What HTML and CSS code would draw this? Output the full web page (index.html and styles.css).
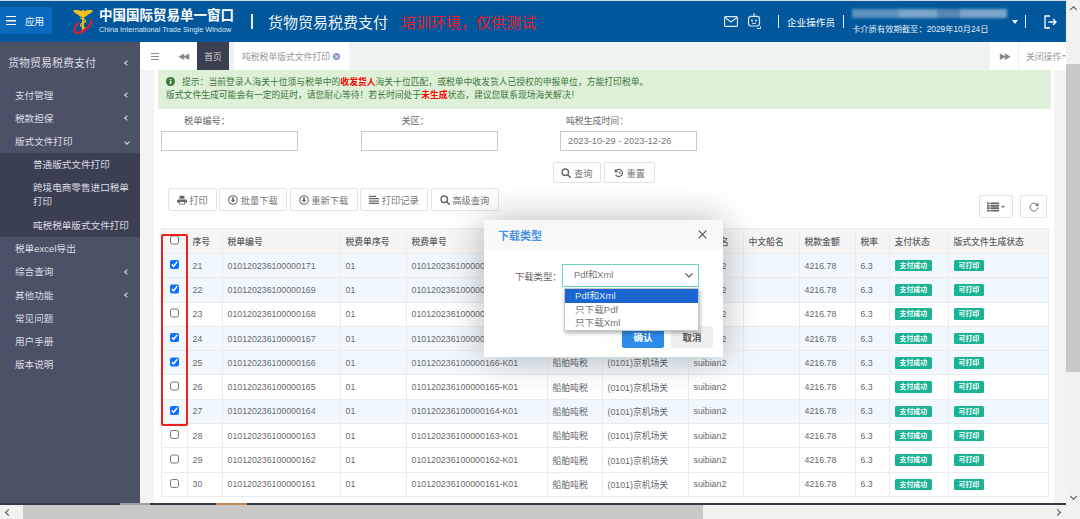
FILE: index.html
```html
<!DOCTYPE html>
<html lang="zh-CN">
<head>
    <meta charset="UTF-8">
    <title>货物贸易税费支付</title>
    <link rel="stylesheet" href="styles.css">
</head>
<body>
    <svg class="icon-defs" width="0" height="0">
        <symbol id="i-print" viewBox="0 0 16 14"><path fill="currentColor" d="M4 0h6.5L12 1.5V5H4zM1.5 6h13A1.5 1.5 0 0 1 16 7.500V11h-3v3H3v-3H0V7.500A1.500 1.500 0 0 1 1.500 6zM4.500 10v2.800h7V10z"/></symbol>
        <symbol id="i-download" viewBox="0 0 14 14"><circle cx="7" cy="7" r="6" fill="none" stroke="currentColor" stroke-width="1.500"/><path fill="currentColor" d="M5.800 3h2.400v4h2L7 10.500 3.800 7h2z"/></symbol>
        <symbol id="i-lines" viewBox="0 0 14 12"><path fill="currentColor" d="M0 0h10v1.800H0zM0 3.300h14v1.800H0zM0 6.600h14v1.800H0zM0 9.900h14v1.800H0z"/></symbol>
        <symbol id="i-search" viewBox="0 0 14 14"><circle cx="6" cy="6" r="4.500" fill="none" stroke="currentColor" stroke-width="2"/><path d="M9.500 9.500L13 13" stroke="currentColor" stroke-width="2.200" stroke-linecap="round"/></symbol>
        <symbol id="i-undo" viewBox="0 0 14 14"><path d="M3.200 3.500A5 5 0 1 1 2.200 9" fill="none" stroke="currentColor" stroke-width="1.700"/><path fill="currentColor" d="M1 1v5h5z"/><path d="M7.500 4.500V7.500H9.800" fill="none" stroke="currentColor" stroke-width="1.300"/></symbol>
        <symbol id="i-thlist" viewBox="0 0 16 12"><path fill="currentColor" d="M0 0h3.500v2.400H0zM4.500 0H16v2.400H4.500zM0 3.200h3.500v2.400H0zM4.500 3.200H16v2.400H4.500zM0 6.400h3.500v2.400H0zM4.500 6.400H16v2.400H4.500zM0 9.600h3.500V12H0zM4.500 9.600H16V12H4.500z"/></symbol>
        <symbol id="i-refresh" viewBox="0 0 14 14"><path d="M11.600 4.200A5.500 5.500 0 1 0 12.500 7.500" fill="none" stroke="currentColor" stroke-width="1.300"/><path fill="currentColor" d="M13 1v4.500H8.500z"/></symbol>
    </svg>

    <div class="viewport">
        <div class="app">
            <header class="topbar">
                <button class="app-btn"><span class="burger"></span>应用</button>
                <svg class="logo" viewBox="0 0 20 26">
                    <path fill="#f4c21f" d="M10 3C7 1 3 .5 0 1.500c1 2 3 3.500 5 4 1.500 2 3 2.500 5 2.500s3.500-.5 5-2.500c2-.5 4-2 5-4C17 .5 13 1 10 3z"/>
                    <path fill="none" stroke="#f4c21f" stroke-width="1.800" d="M10 1v21"/>
                    <path fill="none" stroke="#f4c21f" stroke-width="1.200" d="M7 9c4 1 6 2 5.500 3.500S7.500 14 7.500 16s4 2 5 3.500"/>
                    <path fill="none" stroke="#e0202c" stroke-width="2.200" d="M18 10.500c1 3-1.500 7-5.500 10S3 25 1.800 22.500c-1-2.500 1-6 4.200-9"/>
                </svg>
                <div class="brand">
                    <div class="brand-cn">中国国际贸易单一窗口</div>
                    <div class="brand-en">China International Trade Single Window</div>
                </div>
                <span class="bar bar-title"></span>
                <span class="system-name">货物贸易税费支付</span>
                <span class="env-note">培训环境，仅供测试</span>

                <div class="topbar-right">
                    <svg class="top-icon" width="14" height="11" viewBox="0 0 14 11"><rect x=".6" y=".6" width="12.800" height="9.800" rx="1" fill="none" stroke="#dce8f2" stroke-width="1.100"/><path d="M1 1.500l6 4.500 6-4.500" fill="none" stroke="#dce8f2" stroke-width="1.100"/></svg>
                    <svg class="top-icon robot" width="15" height="17" viewBox="0 0 15 17"><path d="M7 0v3" stroke="#dce8f2" stroke-width="1.200"/><rect x="1.500" y="3.300" width="11" height="9.700" rx="2.500" fill="none" stroke="#dce8f2" stroke-width="1.200"/><circle cx="5" cy="7.500" r="1" fill="#dce8f2"/><circle cx="9" cy="7.500" r="1" fill="#dce8f2"/><path d="M5 10q2 1.300 4 0" fill="none" stroke="#dce8f2"/><path d="M10 15.500h3.500v-2" fill="none" stroke="#dce8f2"/></svg>
                    <span class="bar bar-role"></span>
                    <span class="role">企业操作员</span>
                    <span class="bar bar-card"></span>
                    <div class="account">
                        <div class="account-blur"></div>
                        <div class="account-date">卡介质有效期截至：2029年10月24日</div>
                    </div>
                    <span class="caret-white"></span>
                    <span class="bar bar-exit"></span>
                    <svg class="exit" width="13" height="14" viewBox="0 0 13 14"><path d="M6 1H1v12h5" fill="none" stroke="#fff" stroke-width="1.300"/><path d="M4.500 7H12M9 4l3 3-3 3" fill="none" stroke="#fff" stroke-width="1.300"/></svg>
                </div>
            </header>

            <div class="body-row">
                <nav class="sidebar">
                    <div class="side-title">货物贸易税费支付<i class="chev"></i></div>
                    <a class="side-item">支付管理<i class="chev"></i></a>
                    <a class="side-item">税款担保<i class="chev"></i></a>
                    <a class="side-item">版式文件打印<i class="chev chev-open"></i></a>
                    <div class="side-sub">
                        <a class="sub-item">普通版式文件打印</a>
                        <a class="sub-item sub-two">跨境电商零售进口税单打印</a>
                        <a class="sub-item">吨税税单版式文件打印</a>
                    </div>
                    <a class="side-item">税单excel导出</a>
                    <a class="side-item">综合查询<i class="chev"></i></a>
                    <a class="side-item">其他功能<i class="chev"></i></a>
                    <a class="side-item">常见问题</a>
                    <a class="side-item">用户手册</a>
                    <a class="side-item">版本说明</a>
                </nav>

                <main class="main">
                    <div class="tabbar">
                        <div class="tab-tool tab-burger"><span class="burger burger-grey"></span></div>
                        <div class="tab-tool tab-back">&#9664;&#9664;</div>
                        <div class="tab tab-home">首页</div>
                        <div class="tab tab-active">吨税税单版式文件打印<span class="tab-close">×</span></div>
                        <div class="tab-fill"></div>
                        <div class="tab-tool tab-next">&#9654;&#9654;</div>
                        <div class="tab-close-ops">关闭操作<span class="caret-grey"></span></div>
                    </div>

                    <div class="content">
                        <div class="panel">
                            <div class="alert">
                                <p><svg class="alert-icon" viewBox="0 0 12 12"><circle cx="6" cy="6" r="6" fill="#3c763d"/><rect x="5" y="5" width="2.200" height="4.500" fill="#dff0d8"/><rect x="5" y="2.300" width="2.200" height="1.800" fill="#dff0d8"/></svg>提示：当前登录人海关十位须与税单中的<b>收发货人</b>海关十位匹配，或税单中收发货人已授权的申报单位，方能打印税单。</p>
                                <p>版式文件生成可能会有一定的延时，请您耐心等待！若长时间处于<b>未生成</b>状态，建议您联系现场海关解决！</p>
                            </div>

                            <div class="filters">
                                <div class="field">
                                    <label>税单编号：</label>
                                    <input type="text">
                                </div>
                                <div class="field">
                                    <label>关区：</label>
                                    <input type="text">
                                </div>
                                <div class="field field-date">
                                    <label>吨税生成时间：</label>
                                    <input type="text" value="2023-10-29 - 2023-12-26">
                                </div>
                            </div>

                            <div class="query-row">
                                <button class="btn"><svg class="ico"><use href="#i-search"/></svg>查询</button>
                                <button class="btn"><svg class="ico"><use href="#i-undo"/></svg>重置</button>
                            </div>

                            <div class="toolbar">
                                <div class="toolbar-left">
                                    <button class="btn"><svg class="ico"><use href="#i-print"/></svg>打印</button>
                                    <button class="btn"><svg class="ico"><use href="#i-download"/></svg>批量下载</button>
                                    <button class="btn"><svg class="ico"><use href="#i-download"/></svg>重新下载</button>
                                    <button class="btn"><svg class="ico"><use href="#i-lines"/></svg>打印记录</button>
                                    <button class="btn"><svg class="ico"><use href="#i-search"/></svg>高级查询</button>
                                </div>
                                <div class="toolbar-right">
                                    <button class="btn btn-columns"><svg class="ico"><use href="#i-thlist"/></svg><span class="caret-grey caret-dark"></span></button>
                                    <button class="btn btn-refresh"><svg class="ico"><use href="#i-refresh"/></svg></button>
                                </div>
                            </div>

                            <table class="grid">
                                <colgroup>
                                    <col class="c-check"><col class="c-no"><col class="c-bill"><col class="c-seq"><col class="c-fee">
                                    <col class="c-kind"><col class="c-port"><col class="c-ship"><col class="c-ship-cn">
                                    <col class="c-amount"><col class="c-rate"><col class="c-pay"><col class="c-file">
                                </colgroup>
                                <thead>
                                    <tr><th><input type="checkbox"></th><th>序号</th><th>税单编号</th><th>税费单序号</th><th>税费单号</th><th>税种</th><th>关区</th><th>英文船名</th><th>中文船名</th><th>税款金额</th><th>税率</th><th>支付状态</th><th>版式文件生成状态</th></tr>
                                </thead>
                                <tbody>
                                    <tr class="picked"><td><input type="checkbox" checked></td><td>21</td><td>010120236100000171</td><td>01</td><td>010120236100000171-K01</td><td>船舶吨税</td><td>(0101)京机场关</td><td>suibian2</td><td></td><td>4216.78</td><td>6.3</td><td><span class="badge">支付成功</span></td><td><span class="badge">可打印</span></td></tr>
                                    <tr class="picked"><td><input type="checkbox" checked></td><td>22</td><td>010120236100000169</td><td>01</td><td>010120236100000169-K01</td><td>船舶吨税</td><td>(0101)京机场关</td><td>suibian2</td><td></td><td>4216.78</td><td>6.3</td><td><span class="badge">支付成功</span></td><td><span class="badge">可打印</span></td></tr>
                                    <tr><td><input type="checkbox"></td><td>23</td><td>010120236100000168</td><td>01</td><td>010120236100000168-K01</td><td>船舶吨税</td><td>(0101)京机场关</td><td>suibian2</td><td></td><td>4216.78</td><td>6.3</td><td><span class="badge">支付成功</span></td><td><span class="badge">可打印</span></td></tr>
                                    <tr class="picked"><td><input type="checkbox" checked></td><td>24</td><td>010120236100000167</td><td>01</td><td>010120236100000167-K01</td><td>船舶吨税</td><td>(0101)京机场关</td><td>suibian2</td><td></td><td>4216.78</td><td>6.3</td><td><span class="badge">支付成功</span></td><td><span class="badge">可打印</span></td></tr>
                                    <tr class="picked"><td><input type="checkbox" checked></td><td>25</td><td>010120236100000166</td><td>01</td><td>010120236100000166-K01</td><td>船舶吨税</td><td>(0101)京机场关</td><td>suibian2</td><td></td><td>4216.78</td><td>6.3</td><td><span class="badge">支付成功</span></td><td><span class="badge">可打印</span></td></tr>
                                    <tr><td><input type="checkbox"></td><td>26</td><td>010120236100000165</td><td>01</td><td>010120236100000165-K01</td><td>船舶吨税</td><td>(0101)京机场关</td><td>suibian2</td><td></td><td>4216.78</td><td>6.3</td><td><span class="badge">支付成功</span></td><td><span class="badge">可打印</span></td></tr>
                                    <tr class="picked"><td><input type="checkbox" checked></td><td>27</td><td>010120236100000164</td><td>01</td><td>010120236100000164-K01</td><td>船舶吨税</td><td>(0101)京机场关</td><td>suibian2</td><td></td><td>4216.78</td><td>6.3</td><td><span class="badge">支付成功</span></td><td><span class="badge">可打印</span></td></tr>
                                    <tr><td><input type="checkbox"></td><td>28</td><td>010120236100000163</td><td>01</td><td>010120236100000163-K01</td><td>船舶吨税</td><td>(0101)京机场关</td><td>suibian2</td><td></td><td>4216.78</td><td>6.3</td><td><span class="badge">支付成功</span></td><td><span class="badge">可打印</span></td></tr>
                                    <tr><td><input type="checkbox"></td><td>29</td><td>010120236100000162</td><td>01</td><td>010120236100000162-K01</td><td>船舶吨税</td><td>(0101)京机场关</td><td>suibian2</td><td></td><td>4216.78</td><td>6.3</td><td><span class="badge">支付成功</span></td><td><span class="badge">可打印</span></td></tr>
                                    <tr><td><input type="checkbox"></td><td>30</td><td>010120236100000161</td><td>01</td><td>010120236100000161-K01</td><td>船舶吨税</td><td>(0101)京机场关</td><td>suibian2</td><td></td><td>4216.78</td><td>6.3</td><td><span class="badge">支付成功</span></td><td><span class="badge">可打印</span></td></tr>
                                </tbody>
                            </table>
                        </div>
                    </div>
                </main>
            </div>
            <div class="cut-line"></div>
        </div>

        <div class="vscroll">
            <span class="arrow arrow-up"></span>
            <span class="vthumb"></span>
            <span class="arrow arrow-down"></span>
        </div>
    </div>

    <div class="hscroll">
        <span class="arrow arrow-left"></span>
        <span class="hthumb"></span>
        <span class="arrow arrow-right"></span>
    </div>

    <!-- red annotation round the checkbox column -->
    <div class="annotation"></div>

    <div class="modal">
        <div class="modal-head">
            <span class="modal-title">下载类型</span>
            <svg class="modal-x" width="9" height="9" viewBox="0 0 9 9"><path d="M.7.700l7.600 7.600M8.300.700L.7 8.300" stroke="#555" stroke-width="1.200"/></svg>
        </div>
        <div class="modal-body">
            <div class="modal-row">
                <label>下载类型：</label>
                <div class="select">Pdf和Xml<svg class="select-chev" width="8" height="5" viewBox="0 0 8 5"><path d="M.5.500L4 4 7.500.500" fill="none" stroke="#555" stroke-width="1.100"/></svg>
                    <ul class="options">
                        <li class="selected">Pdf和Xml</li>
                        <li>只下载Pdf</li>
                        <li>只下载Xml</li>
                    </ul>
                </div>
            </div>
            <div class="modal-foot">
                <button class="m-btn m-ok">确认</button>
                <button class="m-btn m-cancel">取消</button>
            </div>
        </div>
    </div>
</body>
</html>
```

FILE: styles.css
```css
* {
    box-sizing: border-box;
}
html, body {
    margin: 0;
    height: 519px;
    overflow: hidden;
}
body {
    position: relative;
    width: 1080px;
    font-family: "Liberation Sans", "Noto Sans CJK SC", sans-serif;
    font-size: 8.8px;
    color: #676a6c;
    background: #fff;
}
button, input {
    font-family: inherit;
}
.icon-defs {
    position: absolute;
}
.viewport {
    display: flex;
    height: 505px;
}
.app {
    flex: 1;
    min-width: 0;
    display: flex;
    flex-direction: column;
}

/* top bar */
.topbar {
    height: 42px;
    flex: none;
    display: flex;
    align-items: center;
    background: #01579b;
    border-top: 1px solid #cfdbe5;
    color: #fff;
}
.app-btn {
    width: 52px;
    height: 27px;
    margin-top: -2px;
    display: flex;
    align-items: center;
    gap: 9px;
    padding: 0 0 0 6px;
    border: none;
    border-radius: 0 3px 3px 0;
    background: #0b69bd;
    color: #fff;
    font-size: 9.500px;
}
.burger {
    display: block;
    width: 10px;
    height: 9px;
    border-top: 1.500px solid #fff;
    border-bottom: 1.500px solid #fff;
    background: linear-gradient(#fff, #fff) center / 100% 1.500px no-repeat;
}
.burger-grey {
    width: 8px;
    height: 7px;
    border-color: #888;
    border-width: 1px;
    background-image: linear-gradient(#888, #888);
    background-size: 100% 1px;
}
.logo {
    width: 20px;
    height: 26px;
    margin: 0 0 0 21px;
}
.brand {
    margin-left: 6px;
    width: 146px;
}
.brand-cn {
    font-size: 13.500px;
    font-weight: bold;
    line-height: 16px;
    white-space: nowrap;
}
.brand-en {
    font-size: 7.300px;
    line-height: 10px;
    margin-top: 1px;
    white-space: nowrap;
    color: #dbe6f0;
}
.bar {
    display: block;
    width: 1px;
    background: #e4edf4;
}
.bar-title {
    width: 1.500px;
    height: 15px;
    margin-left: 6px;
}
.system-name {
    margin-left: 15.500px;
    font-size: 15px;
    white-space: nowrap;
    color: #eef4f9;
}
.env-note {
    margin-left: 13px;
    font-size: 15px;
    white-space: nowrap;
    color: #ee1c25;
}
.topbar-right {
    margin-left: auto;
    display: flex;
    align-items: center;
}
.robot {
    margin-left: 9px;
}
.bar-role {
    height: 13px;
    margin-left: 16px;
}
.role {
    margin-left: 8px;
    font-size: 9.600px;
    white-space: nowrap;
}
.bar-card {
    height: 13px;
    margin-left: 8px;
}
.account {
    margin-left: 8px;
    width: 155px;
}
.account-blur {
    height: 9px;
    margin-bottom: 7px;
    background: linear-gradient(90deg, #5f93c0 0 30%, #7ba6cc 30% 55%, #5788b4 55% 70%, #7ba6cc 70% 100%);
    filter: blur(1.500px);
}
.account-date {
    font-size: 8.300px;
    line-height: 9px;
    white-space: nowrap;
    color: #e6eef5;
}
.caret-white {
    margin-left: 5px;
    border: 3.500px solid transparent;
    border-top: 4.500px solid #fff;
    border-bottom: 0;
}
.bar-exit {
    height: 13px;
    margin-left: 7px;
}
.exit {
    margin: 0 9px 0 18px;
}

/* sidebar */
.body-row {
    flex: 1;
    min-height: 0;
    display: flex;
}
.sidebar {
    width: 140px;
    flex: none;
    background: #4c5266;
    color: #dcdee4;
    font-size: 9.600px;
}
.side-title {
    position: relative;
    height: 41.500px;
    padding-left: 8px;
    line-height: 43px;
    font-size: 11px;
}
.side-item {
    position: relative;
    display: block;
    height: 23.300px;
    line-height: 23.300px;
    padding-left: 15px;
}
.side-sub {
    background: #3a3f51;
}
.sub-item {
    display: block;
    height: 23.300px;
    line-height: 23.300px;
    padding-left: 33px;
}
.sub-two {
    height: 37px;
    padding-top: 4px;
    padding-right: 8px;
    line-height: 14px;
}
.chev {
    position: absolute;
    right: 11px;
    top: 50%;
    width: 4px;
    height: 4px;
    margin-top: -2px;
    border-left: 1px solid #dcdee4;
    border-bottom: 1px solid #dcdee4;
    transform: rotate(45deg);
}
.chev-open {
    transform: rotate(-45deg);
}

/* tabs */
.main {
    flex: 1;
    min-width: 0;
    display: flex;
    flex-direction: column;
}
.tabbar {
    height: 28px;
    flex: none;
    display: flex;
    align-items: stretch;
    background: #f0f3f4;
    color: #999;
    font-size: 8.800px;
}
.tab-tool {
    display: flex;
    align-items: center;
    justify-content: center;
    width: 28px;
    background: #fff;
    font-size: 7px;
    letter-spacing: -2px;
    color: #888;
}
.tab-burger {
    width: 29px;
}
.tab {
    display: flex;
    align-items: center;
    white-space: nowrap;
}
.tab-home {
    width: 32px;
    justify-content: center;
    background: #3a3f51;
    color: #d6d8dd;
}
.tab-active {
    width: 115px;
    margin-left: 5px;
    padding-left: 8px;
    background: #fff;
}
.tab-close {
    width: 7px;
    height: 7px;
    margin-left: 3px;
    border-radius: 50%;
    background: #7f97c2;
    color: #fff;
    font-size: 7px;
    line-height: 7px;
    text-align: center;
}
.tab-fill {
    flex: 1;
}
.tab-close-ops {
    width: 48px;
    display: flex;
    align-items: center;
    padding-left: 7px;
    background: #fff;
    white-space: nowrap;
    border-left: 1px solid #f0f0f0;
}
.caret-grey {
    margin-left: 1px;
    border: 2px solid transparent;
    border-top: 2.500px solid #999;
    border-bottom: 0;
}

/* content */
.content {
    flex: 1;
    min-height: 0;
    display: flex;
    padding: 0 12px 0 14px;
    background: #f3f3f3;
}
.panel {
    flex: 1;
    min-width: 0;
    background: #fff;
    overflow: hidden;
}
.alert {
    height: 39px;
    margin: 0 3px 0 4px;
    padding: 6px 0 0 8px;
    background: #dff0d8;
    color: #3c763d;
    line-height: 12.500px;
    border-radius: 1px;
}
.alert p {
    margin: 0;
    white-space: nowrap;
}
.alert b {
    color: #f00;
}
.alert-icon {
    width: 9px;
    height: 9px;
    margin-right: 7px;
    vertical-align: -1px;
}
.filters {
    display: grid;
    grid-template-columns: 199.500px 199.500px 137px;
    margin: 6px 0 0 7px;
}
.field label {
    display: block;
    width: 69px;
    height: 16px;
    line-height: 12px;
    text-align: right;
    font-size: 9.200px;
    color: #676a6c;
    white-space: nowrap;
}
.field:nth-child(2) label {
    width: 68.500px;
}
.field-date label {
    width: 68px;
    text-align: left;
    padding-left: 6px;
    font-size: 8.900px;
}
.field input {
    display: block;
    width: 137px;
    height: 20px;
    border: 1px solid #c9c9c9;
    padding: 0 7px;
    font-size: 9.300px;
    color: #777;
    outline: none;
}
.query-row {
    display: flex;
    gap: 3px;
    margin: 11px 0 0 399px;
}
.btn {
    display: flex;
    align-items: center;
    justify-content: center;
    height: 21px;
    padding: 0;
    background: #fff;
    border: 1px solid #e2e2e2;
    border-radius: 2px;
    color: #777;
    font-size: 9.300px;
    white-space: nowrap;
}
.query-row .btn:first-child {
    width: 48px;
}
.query-row .btn:last-child {
    width: 51px;
}
.ico {
    width: 10px;
    height: 10px;
    margin-right: 2.500px;
    color: #666;
}
.toolbar {
    display: flex;
    justify-content: space-between;
    height: 40px;
    margin: 5px 0 0 14px;
    padding-right: 7px;
}
.toolbar-left {
    display: flex;
    gap: 2.500px;
}
.toolbar-left .btn {
    height: 23px;
}
.toolbar-left .btn:nth-child(1) {
    width: 48.500px;
}
.toolbar-left .btn:nth-child(2),
.toolbar-left .btn:nth-child(3),
.toolbar-left .btn:nth-child(4),
.toolbar-left .btn:nth-child(5) {
    width: 68px;
}
.toolbar-right {
    display: flex;
    gap: 7px;
    margin-top: 7px;
}
.toolbar-right .btn {
    height: 23px;
}
.btn-columns {
    width: 34px;
}
.btn-refresh {
    width: 27px;
}
.btn-columns .ico {
    width: 12px;
    margin-right: 2px;
}
.btn-refresh .ico {
    width: 10px;
    height: 10px;
    margin-right: 0;
}
.caret-dark {
    margin-left: 0;
    border-top-color: #666;
}

/* table */
.grid {
    width: 886px;
    margin-left: 7px;
    border-collapse: collapse;
    table-layout: fixed;
}
.c-check { width: 25.500px; }
.c-no { width: 35px; }
.c-bill { width: 118px; }
.c-seq { width: 66px; }
.c-fee { width: 141px; }
.c-kind { width: 55px; }
.c-port { width: 86px; }
.c-ship { width: 55px; }
.c-ship-cn { width: 56px; }
.c-amount { width: 56px; }
.c-rate { width: 34px; }
.c-pay { width: 59px; }
.c-file { width: 100px; }
.grid th, .grid td {
    padding: 0 0 0 5px;
    border: 1px solid #e9ebec;
    text-align: left;
    white-space: nowrap;
    overflow: hidden;
}
.grid th {
    height: 25px;
    background: #f5f5f5;
    color: #5a5c5e;
    font-weight: 500;
}
.grid td {
    height: 24.300px;
}
.grid th:first-child, .grid td:first-child {
    padding: 0;
    text-align: center;
}
.grid input {
    display: block;
    width: 9.500px;
    height: 9.500px;
    margin: -2px auto 0;
    accent-color: #0d6efd;
}
.picked td {
    background: #f0f8fd;
}
.badge {
    display: inline-block;
    padding: 0 5px;
    height: 11.500px;
    line-height: 11.500px;
    border-radius: 1.500px;
    background: #1ab394;
    color: #fff;
    font-size: 6.900px;
    font-weight: bold;
    vertical-align: middle;
}

/* scrollbars */
.cut-line {
    height: 2px;
    flex: none;
    background: linear-gradient(90deg, #333a48 0 120px, #9aa0a6 120px 150px, #333a48 150px 216px, #c08a58 216px 247px, #333a48 247px);
}
.vscroll {
    position: relative;
    width: 14px;
    flex: none;
    background: #f1f1f1;
}
.vthumb {
    position: absolute;
    left: 0;
    right: 0;
    top: 64px;
    height: 308px;
    background: #c8c8c8;
}
.hscroll {
    position: relative;
    height: 14px;
    background: #f1f1f1;
}
.hthumb {
    position: absolute;
    left: 23px;
    top: 0;
    bottom: 0;
    width: 680px;
    background: #c8c8c8;
}
.arrow {
    position: absolute;
    width: 5px;
    height: 5px;
    border-left: 1.200px solid #505050;
    border-top: 1.200px solid #505050;
}
.arrow-up {
    left: 5px;
    top: 7px;
    transform: rotate(45deg);
}
.arrow-down {
    left: 5px;
    bottom: 6px;
    transform: rotate(225deg);
}
.arrow-left {
    left: 6px;
    top: 5px;
    transform: rotate(-45deg);
}
.arrow-right {
    right: 20px;
    top: 5px;
    transform: rotate(135deg);
}

/* overlays */
.annotation {
    position: absolute;
    left: 160.500px;
    top: 233.500px;
    width: 27px;
    height: 192px;
    border: 2px solid #f2201c;
    border-radius: 2px;
}
.modal {
    position: absolute;
    left: 484px;
    top: 219.500px;
    width: 239px;
    height: 137px;
    background: #fff;
    box-shadow: 0 0 35px rgba(0, 0, 0, 0.28);
}
.modal-head {
    height: 30px;
    display: flex;
    align-items: center;
    justify-content: space-between;
    padding: 0 16px 0 14px;
    background: #f8f8f8;
}
.modal-title {
    font-size: 11px;
    font-weight: bold;
    color: #4a94e6;
}
.modal-body {
    padding-top: 14.500px;
}
.modal-row {
    display: flex;
    align-items: center;
    padding-left: 31px;
    font-size: 9.300px;
    color: #666;
}
.modal-row label {
    width: 47px;
    white-space: nowrap;
}
.select {
    position: relative;
    width: 137px;
    height: 23px;
    line-height: 21px;
    padding-left: 11px;
    border: 1px solid #6fd3bf;
    font-size: 9.300px;
    color: #777;
}
.select-chev {
    position: absolute;
    right: 5px;
    top: 8px;
}
.options {
    position: absolute;
    left: 1px;
    top: 23px;
    width: 135px;
    margin: 0;
    padding: 0;
    list-style: none;
    background: #fff;
    border: 1px solid #c7c7c7;
    box-shadow: 1px 2px 4px rgba(0, 0, 0, 0.3);
    font-size: 9.600px;
    z-index: 1;
}
.options li {
    height: 13.500px;
    line-height: 13.500px;
    padding-left: 10px;
    color: #777;
}
.options .selected {
    background: #1b66d2;
    color: #dfe9f8;
}
.modal-foot {
    display: flex;
    justify-content: flex-end;
    gap: 7px;
    padding: 39px 10px 0 0;
}
.m-btn {
    width: 42px;
    height: 22px;
    padding: 0;
    border: none;
    border-radius: 2px;
    font-size: 9.500px;
    font-weight: bold;
}
.m-ok {
    background: #2d8ceb;
    color: #fff;
}
.m-cancel {
    background: #f0f0f0;
    color: #555;
}
```
